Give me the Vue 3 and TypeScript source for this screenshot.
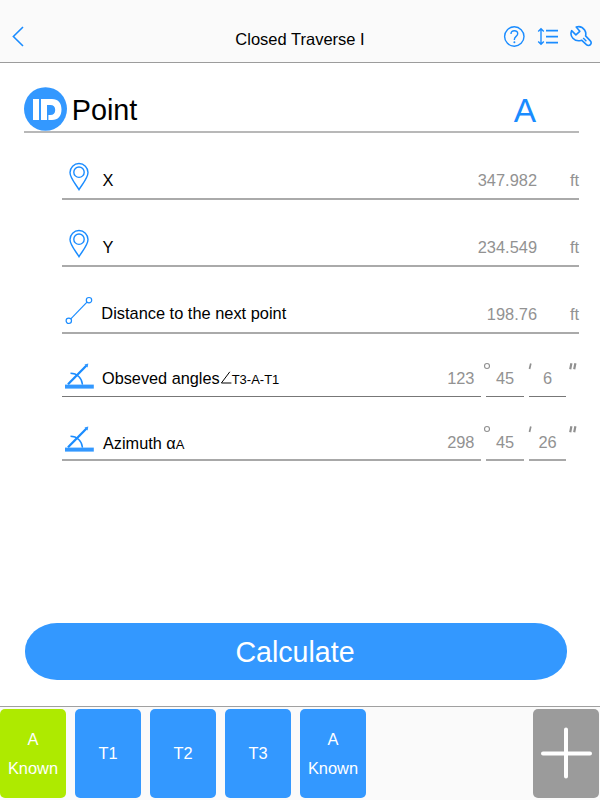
<script setup lang="ts">
import { ref } from 'vue'

interface LengthRow {
  icon: 'pin' | 'segment'
  label: string
  value: string
}
interface AngleRow {
  kind: string
  label: string
  suffix: string
  parts: [string, string, string]
}

const lengths: LengthRow[] = [
  { icon: 'pin', label: 'X', value: '347.982' },
  { icon: 'pin', label: 'Y', value: '234.549' },
  { icon: 'segment', label: 'Distance to the next point', value: '198.76' },
]
const angles: AngleRow[] = [
  { kind: 'observed', label: 'Obseved angles', suffix: 'T3-A-T1', parts: ['123', '45', '6'] },
  { kind: 'azimuth', label: 'Azimuth α', suffix: 'A', parts: ['298', '45', '26'] },
]
const tabs: string[][] = [['A', 'Known'], ['T1'], ['T2'], ['T3'], ['A', 'Known']]
const active = ref(0)
</script>

<template>
  <div class="screen">
    <header class="bar">
      <svg class="back" width="14" height="24" viewBox="0 0 14 24"><path d="M12 3 2.400 12.500 12 22" /></svg>
      <h1>Closed Traverse I</h1>
      <div class="tools">
        <svg width="22" height="24" viewBox="0 0 22 24">
          <circle cx="11.300" cy="12.500" r="9.700" />
          <path d="M8 10C8 7.900 9.300 6.800 11.300 6.800s3.400 1.200 3.400 3c0 2.500-3.300 2.700-3.300 5.400v.9" />
          <circle class="solid" cx="11.400" cy="18.300" r="1" />
        </svg>
        <svg width="22" height="24" viewBox="0 0 22 24">
          <path d="M4 4.800v15.400M1.200 7.500 4 4.700 6.800 7.500M1.200 17.500 4 20.300 6.800 17.500" />
          <path class="thick" d="M9 6.600h12M9 12.600h12M9 18.600h12" />
        </svg>
        <svg width="22" height="24" viewBox="0 0 22 24">
          <path class="wrench" d="M6.200 3C9.500 2 12.800 3.300 14.600 6c1.200 1.900 1.500 3.900 1 5.900l4.500 4.700c1.100 1.200 1.300 2.900.3 4s-2.900 1-4 0l-4.800-4.400c-3.200 1.100-6.600.3-8.700-2C.8 12 .6 9.200 1.600 6.700l4.300 4.100 3.900-3.500z" />
          <path d="m13.200 14 3.200 3.200" />
        </svg>
      </div>
    </header>

    <main class="form">
      <section class="heading">
        <div class="badge">
          <svg width="43" height="44" viewBox="0 0 43 44">
            <ellipse cx="21.500" cy="22" rx="21.500" ry="21.800" />
            <rect x="9" y="12" width="6" height="21" />
            <path fill-rule="evenodd" d="M17 12h11c6 0 9.500 4 9.500 10.500S34 33 28 33H17zM23 18v10h3.400c3 0 4.800-1.800 4.800-5s-1.800-5-4.800-5z" />
            <path class="cut" d="M23.700 27v6" />
          </svg>
        </div>
        <h2>Point</h2>
        <span class="name">A</span>
      </section>

      <section class="fields">
        <div v-for="row in lengths" :key="row.label" class="length" :class="row.icon">
          <svg v-if="row.icon === 'pin'" class="icon" width="34" height="30" viewBox="0 0 34 30">
            <path d="M17 28.700C14 23.500 8 17 8 11.500a9 9 0 0 1 18 0c0 5.500-6 12-9 17.200z" />
            <circle cx="17" cy="11.200" r="5.200" />
          </svg>
          <svg v-else class="icon" width="34" height="30" viewBox="0 0 34 30">
            <circle cx="6.800" cy="24.800" r="2.700" /><circle cx="27" cy="4.200" r="2.700" />
            <path d="M8.800 22.800 25 6.200" />
          </svg>
          <span class="label">{{ row.label }}</span>
          <span class="value">{{ row.value }}</span>
          <span class="unit">ft</span>
        </div>

        <div v-for="row in angles" :key="row.kind" class="angle" :class="row.kind">
          <div class="cell degrees">
            <svg class="icon" width="34" height="28" viewBox="0 0 34 28">
              <rect class="base" x="3" y="22.600" width="28.800" height="4" />
              <path class="arm" d="M6 22.300 24.500 3.500" />
              <path class="tip" d="m22.500 2.600 3.800-1.200-.7 4z" />
              <path d="M8.500 11.200c6.500 0 11.500 4.800 12 11.400" />
            </svg>
            <span class="label">{{ row.label }}<svg v-if="row.kind === 'observed'" class="corner" width="12" height="13" viewBox="0 0 12 13"><path d="M9.800.8 1.400 12H11.400" /></svg><small>{{ row.suffix }}</small></span>
            <span class="value">{{ row.parts[0] }}</span>
            <svg class="mark" width="10" height="10" viewBox="0 0 10 10"><circle cx="5" cy="5" r="2.500" /></svg>
          </div>
          <div class="cell minutes">
            {{ row.parts[1] }}
            <svg class="mark" width="10" height="10" viewBox="0 0 10 10"><path class="stroke" d="m5.800 2.500-1.300 5.500" /></svg>
          </div>
          <div class="cell seconds">
            {{ row.parts[2] }}
            <svg class="mark" width="10" height="10" viewBox="0 0 10 10"><path class="stroke double" d="M4.400 2.200 3.200 8.200M8.400 2.200 7.200 8.200" /></svg>
          </div>
        </div>
      </section>

      <button class="calculate" type="button">Calculate</button>
    </main>

    <footer class="tabs">
      <button v-for="(tab, i) in tabs" :key="i" type="button" class="tab" :class="{ active: i === active }" @click="active = i">
        <span v-for="line in tab" :key="line">{{ line }}</span>
      </button>
      <button class="add" type="button">
        <svg width="66" height="89" viewBox="0 0 66 89"><path d="M10 44.500h47M33 20.500v47" /></svg>
      </button>
    </footer>
  </div>
</template>

<style>
body { margin: 0; background: #fff; }
</style>

<style scoped>
.screen {
  width: 600px;
  height: 800px;
  display: flex;
  flex-direction: column;
  overflow: hidden;
  background: #fff;
  color: #000;
  font: 16.4px/20px "Liberation Sans", Arial, sans-serif;
}
svg { display: block; flex: none; fill: none; stroke: #1a8cff; stroke-width: 1.4; }
h1, h2 { margin: 0; font-weight: 400; }
button { border: 0; padding: 0; font: inherit; color: #fff; }

.bar {
  box-sizing: border-box;
  height: 63px;
  padding: 24px 8px 0 11px;
  display: grid;
  grid-template-columns: 100px 1fr 100px;
  align-items: start;
  background: #fafafa;
  border-bottom: 1px solid #9c9c9c;
}
.back { stroke-width: 1.6; }
.bar h1 { padding: 5px 3px 0 0; text-align: center; font-size: 16.500px; }
.tools { display: flex; justify-content: flex-end; gap: 11.500px; }
.tools .solid { fill: #1a8cff; stroke: none; }
.tools .thick { stroke-width: 1.9; }
.wrench { stroke-width: 1.600; stroke-linejoin: round; }

.form { flex: 1; display: flex; flex-direction: column; }
.heading {
  margin: 24px 21px 0 24px;
  height: 44px;
  display: flex;
  border-bottom: 2px solid #b8b8b8;
}
.badge svg { stroke: none; fill: #fff; }
.badge ellipse { fill: #3398ff; }
.badge .cut { stroke: #3398ff; stroke-width: 1.400; }
.heading h2 { padding: 7px 0 0 4.700px; font-size: 28.800px; line-height: 32px; }
.name { margin-left: auto; padding: 6px 43px 0 0; font-size: 33.5px; line-height: 36px; color: #1a8cff; }

.fields { margin: 0 21px 0 62px; }
.length {
  box-sizing: border-box;
  height: 67px;
  display: flex;
  align-items: flex-end;
  border-bottom: 2px solid #aaa;
}
.length .icon { margin-bottom: 7px; }
.label { margin-left: 6.500px; padding-bottom: 8px; white-space: nowrap; }
.value, .unit { padding-bottom: 8px; color: #929292; }
.value { margin-left: auto; }
.unit { width: 42px; text-align: right; }
.segment .icon { margin-bottom: 6px; stroke-width: 1.2; }
.segment .label { margin-left: 5.300px; padding-bottom: 9px; }

.angle { display: flex; gap: 5px; height: 63px; }
.azimuth { height: 64px; }
.cell {
  position: relative;
  box-sizing: border-box;
  height: 100%;
  display: flex;
  align-items: flex-end;
  justify-content: center;
  padding-bottom: 8px;
  border-bottom: 1px solid #777;
  color: #929292;
}
.azimuth .cell { padding-bottom: 7px; border-bottom: 2px solid #a8a8a8; }
.degrees { width: 419px; padding-right: 6.500px; justify-content: flex-start; }
.minutes { width: 38px; }
.seconds { width: 37px; }
.cell .icon { margin-bottom: -2px; }
.azimuth .icon { margin-bottom: -1px; }
.cell .label { margin: 0 0 -2px 6px; padding: 0; color: #000; font-size: 16.300px; }
.cell .value { padding: 0; }
.azimuth .cell .label { margin: 0 0 -3px 7px; }
.cell small { font-size: 13px; }
.corner { display: inline-block; stroke: #000; stroke-width: 1; }
.base, .tip { fill: #3398ff; stroke: none; }
.arm { stroke-width: 2.300; }
.mark { position: absolute; right: -11px; top: 27px; stroke: #909090; stroke-width: 1.100; }
.stroke { stroke-width: 1.700; }
.stroke.double { stroke-width: 2.200; }

.calculate {
  margin: auto 33px 26px 25px;
  height: 57px;
  border-radius: 32px / 28px;
  background: #3398ff;
  padding-right: 2px;
  font-size: 28.600px;
  line-height: 58px;
}

.tabs {
  box-sizing: border-box;
  height: 94px;
  display: flex;
  gap: 9px;
  padding: 2px 1px 2px 0;
  background: #fafafa;
  border-top: 1px solid #a0a0a0;
}
.tab, .add { width: 66px; height: 89px; border-radius: 5px; }
.tab {
  display: flex;
  flex-direction: column;
  align-items: center;
  justify-content: center;
  background: #3398ff;
  line-height: 28.500px;
}
.tab.active { background: #aeea00; }
.add { margin-left: auto; background: #9b9b9b; }
.add svg { stroke: #fff; stroke-width: 4; stroke-linecap: round; }
</style>
